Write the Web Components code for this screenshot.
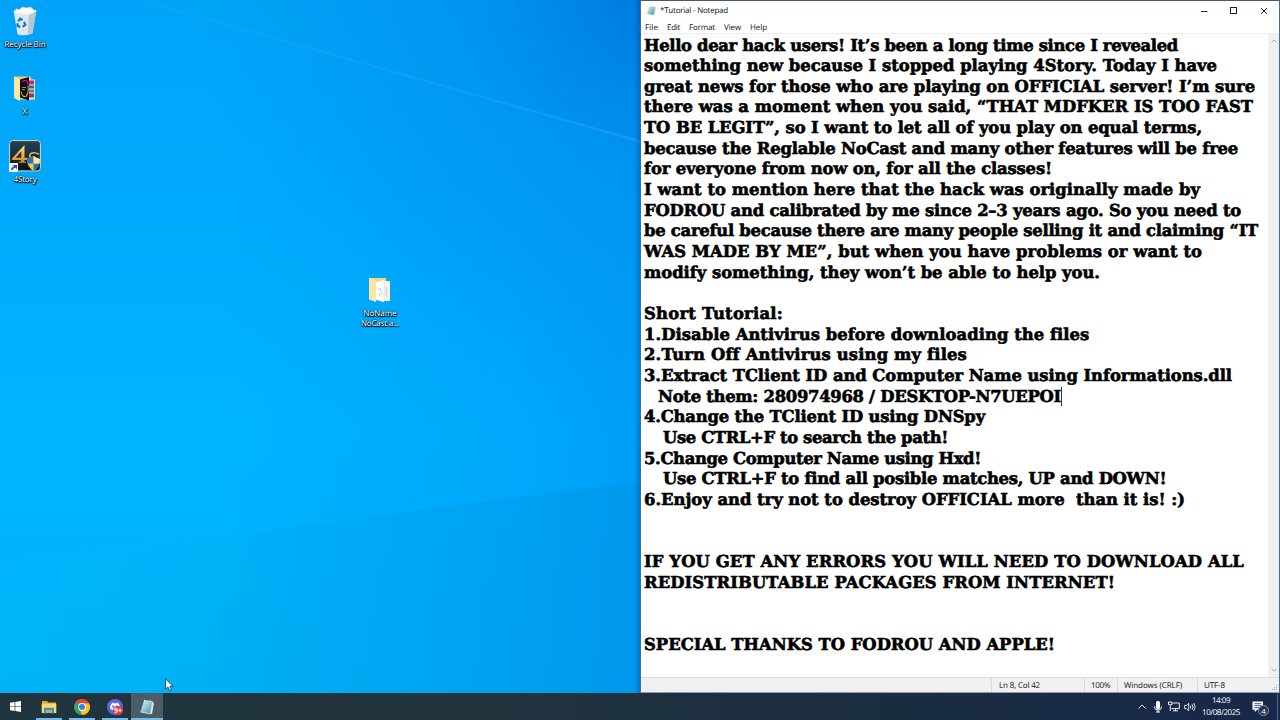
<!DOCTYPE html>
<html lang="en">
<head>
<meta charset="utf-8">
<title>Desktop</title>
<style>
  html, body {
    margin: 0;
    width: 1280px;
    height: 720px;
    overflow: hidden;
  }
</style>
</head>
<body>
<desktop-screen></desktop-screen>

<script>
const UI_FONT = '"Open Sans", "Noto Sans", sans-serif';

const ICONS = {
  bin: `<svg viewBox="0 0 28 32" width="28" height="30">
    <path d="M2 6 L6 30 Q14 33 22 29 L26 5 Z" fill="#dfe8ee"/>
    <path d="M18 8 L26 5 L22 29 L17 31 Z" fill="#b8c8d3"/>
    <path d="M2 6 L5 3 L8 4 L11 1 L16 2 L20 1 L23 4 L26 5 L18 9 Z" fill="#fafafa" stroke="#c9d4da" stroke-width=".6"/>
    <path d="M2 6 L18 9 L26 5" fill="none" stroke="#fff" stroke-width="1"/>
    <g fill="none" stroke="#1676c8" stroke-width="2.3">
      <path d="M6.7 16.5 L8.8 13.6 L11.4 15"/>
      <path d="M13 17 L14.3 20 L11.5 22.2"/>
      <path d="M9 22.3 L6 21.5 L6 18.5"/>
    </g>
  </svg>`,
  mediaFolder: `<svg viewBox="0 0 22 26" width="22" height="27">
    <path d="M0 1 H17 V24 H5 L0 22 Z" fill="#e9cf77"/>
    <path d="M12 4 H21 V24 H12 Z" fill="#e8e4ed"/>
    <path d="M14 5 H20 V9 H14 Z" fill="#b63a4d"/>
    <path d="M14 10 H20 V13 H14 Z" fill="#604eb0"/>
    <path d="M14 14 H20 V17 H14 Z" fill="#2c9a8d"/>
    <path d="M14 18 H20 V22 H14 Z" fill="#a53155"/>
    <path d="M6 4 L15 1.5 V25 L6 22 Z" fill="#150d18"/>
    <path d="M8 6 Q14 3 14 9" fill="none" stroke="#c322b5" stroke-width="1.2"/>
    <path d="M14 10 Q15 18 12 21" fill="none" stroke="#e09a2b" stroke-width="1.1"/>
    <path d="M7 16 Q8 22 12 21" fill="none" stroke="#8fbd32" stroke-width="1.1"/>
    <path d="M8 12 H12 M8 14 H11" stroke="#aaa" stroke-width=".8"/>
    <path d="M0 1 L6 3.5 V25.5 L0 22.5 Z" fill="#fbe9a5"/>
  </svg>`,
  game: `<svg viewBox="0 0 32 32" width="32" height="32">
    <defs><linearGradient id="g" x2="0" y2="1"><stop stop-color="#263f55"/><stop offset=".6" stop-color="#15293c"/><stop offset="1" stop-color="#0a0e14"/></linearGradient>
    <linearGradient id="o" x2="0" y2="1"><stop stop-color="#ffe27c"/><stop offset="1" stop-color="#d98612"/></linearGradient></defs>
    <rect x=".6" y=".6" width="30.8" height="30.3" rx="3" fill="url(#g)" stroke="#d6d9bb" stroke-width="1"/>
    <path d="M15.5 5 L3 18.6 V19.9 H12.3 L11.4 21.8 H9.5 V22.8 H17 V21.8 H15.4 V19.9 H18.5 V17.8 H15.5 Z M12.3 11.3 V17.8 H6.8 Z" fill="url(#o)" fill-rule="evenodd"/>
    <path d="M30 14.3 Q25 11.5 21.5 13.7 Q19.4 16 22 17.6 L27 20" fill="none" stroke="#eeb03c" stroke-width="1.6"/>
    <path d="M18 19 Q22 18 24.5 16 Q27 18 31 19 Q31 27 24.5 31 Q18 27 18 19 Z" fill="#f6c64a"/>
    <path d="M18 19 Q22 18 24.5 16 V23.5 H18.6 Z M24.5 23.5 H30.5 Q29 28 24.5 31 Z" fill="#1c74c9"/>
    <path d="M24.5 16 Q27 18 31 19 L30.4 23.5 H24.5 Z" fill="#ffe59a"/>
    <rect y="23" width="9" height="9" fill="#f5f7fa"/>
    <path d="M2 30 Q2 27 5 26.5 L3.6 25 H8 V29.2 L6.5 27.8 Q4 28 3.5 30 Z" fill="#2456b5"/>
  </svg>`,
  paperFolder: `<svg viewBox="0 0 22 26" width="22" height="26">
    <path d="M0 1 H17 V23 H5 L0 22 Z" fill="#f0d67f"/>
    <path d="M12 4 H21 V24 H14 Z" fill="#f2f4f5"/>
    <path d="M7 5 L15 3 V25 L7 23 Z" fill="#fff"/>
    <path d="M15 4 V24" stroke="#d5dadb" stroke-width=".6"/>
    <path d="M9 13 L11 11 L13 18 M10 16 L11 20 M17 10 L18 20" fill="none" stroke="#b9bdbf" stroke-width=".8"/>
    <path d="M0 1 L7 3 V25 L0 22.5 Z" fill="#fbe5a0"/>
  </svg>`,
  notepad: `<svg viewBox="0 0 16 16" width="100%" height="100%">
    <defs><linearGradient id="n" x2="1" y2="1"><stop stop-color="#d8f1f3"/><stop offset=".5" stop-color="#8bc9d2"/><stop offset="1" stop-color="#3f8797"/></linearGradient></defs>
    <path d="M12.5 2 L15 4 L13 15 L9 14 Z" fill="#dce2df"/>
    <path d="M5 1.5 L13.2 2.4 L10.8 14.8 L1.5 13 Z" fill="url(#n)"/>
    <path d="M5 1.5 L13.2 2.4" stroke="#eef5f4" stroke-width="1.3" stroke-dasharray="1 .6"/>
    <path d="M1.5 13 L10.8 14.8 L12 14.4" fill="none" stroke="#e8eeee" stroke-width=".8"/>
  </svg>`,
  start: `<svg viewBox="0 0 12 12" width="11" height="11"><path d="M0 1.9 L5.1 1.1 V5.6 H0 Z M5.8 1 L12 .1 V5.6 H5.8 Z M0 6.3 H5.1 V10.8 L0 10 Z M5.8 6.3 H12 V11.9 L5.8 11 Z" fill="#fff"/></svg>`,
  explorer: `<svg viewBox="0 0 16 14" width="16" height="14">
    <path d="M1 1 H6 L7.5 2.5 H15 V6 H1 Z" fill="#e0a82c"/>
    <path d="M.7 3.6 H15.3 V13 H.7 Z" fill="#fbd768"/>
    <path d="M3 13.5 V7.8 H13 V13.5 H10.6 V10.4 H5.4 V13.5 Z" fill="#3b93c6"/>
    <path d="M5.4 10.4 H10.6 V13 H5.4 Z" fill="#bfae69"/>
  </svg>`,
  chrome: `<svg viewBox="0 0 16 16" width="16" height="16">
    <path d="M8 8 L1.07 4 A8 8 0 0 1 14.93 4 Z" fill="#e94435"/>
    <path d="M8 8 L14.93 4 A8 8 0 0 1 8 16 Z" fill="#fbc116"/>
    <path d="M8 8 V16 A8 8 0 0 1 1.07 4 Z" fill="#34a552"/>
    <path d="M8 4.3 H14.93 L11.2 9.8 Z" fill="#fbc116"/>
    <path d="M4.8 9.8 L1.07 4 L8 4.3 Z" fill="#34a552"/>
    <path d="M11.2 9.8 L8 16 L6 11 Z" fill="#fbc116"/>
    <path d="M2 4 Q4 2 8 4.3 H14.9 L13 2 L8 0 L3 2 Z" fill="#e94435"/>
    <circle cx="8" cy="8" r="3.9" fill="#fff"/><circle cx="8" cy="8" r="3" fill="#347fe8"/>
  </svg>`,
  discord: `<svg viewBox="0 0 16 16" width="16" height="16">
    <circle cx="8" cy="8" r="8" fill="#5865e8"/>
    <path d="M3.3 10 Q2.7 6.2 4.7 4.2 L6.8 3.5 L7.3 4.4 H8.8 L9.3 3.5 L11.4 4.2 Q13.3 6.2 12.8 10 L10.6 11 L9.9 9.8 H6.2 L5.5 11 Z" fill="#fff"/>
    <ellipse cx="6.2" cy="7.5" rx="1" ry="1.2" fill="#5865e8"/><ellipse cx="9.9" cy="7.5" rx="1" ry="1.2" fill="#5865e8"/>
  </svg>`,
  chevron: `<svg viewBox="0 0 8 5" width="8" height="5"><path d="M.5 4.5 L4 1 L7.5 4.5" fill="none" stroke="#f2f2f2" stroke-width="1"/></svg>`,
  mic: `<svg viewBox="0 0 8 12" width="8" height="12"><rect x="2" y="0" width="4" height="8" rx="1.5" fill="#fff"/><path d="M.7 5.5 V7 Q1 9 4 9 Q7 9 7.3 7 V5.5 M4 9 V11 M2 11 H6" fill="none" stroke="#fff"/></svg>`,
  network: `<svg viewBox="0 0 12 11" width="12" height="11"><path d="M4.5 2 H11.3 V7.6 H3.5 M7.5 7.6 V9.8 M5 9.8 H10 M2.3 4.5 V10" fill="none" stroke="#eee"/><path d="M.5 1 H4 V3.7 H.5 Z" fill="#18294a" stroke="#eee"/></svg>`,
  volume: `<svg viewBox="0 0 12 10" width="12" height="10"><path d="M.6 3.4 H2.4 L4.7 1.2 V8.8 L2.4 6.6 H.6 Z M6.3 3.5 Q7.3 5 6.3 6.5 M8 2.2 Q10 5 8 7.8 M9.8 1 Q12.4 5 9.8 9" fill="none" stroke="#eee" stroke-width=".9"/></svg>`,
  action: `<svg viewBox="0 0 12 12" width="12" height="12"><path d="M.5 .5 H11 V8.8 H5 L2.8 11.2 V8.8 H.5 Z" fill="#fff"/><path d="M2.3 2.7 H9.3 M2.3 4.7 H9.3 M2.3 6.7 H7" stroke="#1b2a48" stroke-width=".8"/></svg>`,
  minimize: `<svg viewBox="0 0 8 8" width="8" height="8"><path d="M1 4.5 H7.5" stroke="#222"/></svg>`,
  maximize: `<svg viewBox="0 0 8 8" width="8" height="8"><rect x=".5" y=".5" width="6" height="6" fill="none" stroke="#222"/></svg>`,
  close: `<svg viewBox="0 0 8 8" width="8" height="8"><path d="M1 1 L7 7 M7 1 L1 7" stroke="#222"/></svg>`,
  pointer: `<svg viewBox="0 0 9 14" width="9" height="14"><path d="M.6 .8 V11 L3 8.9 L4.6 12.6 L6.4 11.8 L4.8 8.3 H8 Z" fill="#fff" stroke="#1b3340" stroke-width=".8"/></svg>`,
};

// Base class: every element renders a template string into an open root.
class View extends HTMLElement {
  constructor() {
    super();
    this.attachShadow({ mode: "open" });
  }

  connectedCallback() {
    this.shadowRoot.innerHTML = this.template();
  }
}

class SysIcon extends View {
  template() {
    return `
    <style>
      :host { display: block; flex: none; line-height: 0; }
      svg { display: block; }
    </style>
    ${ICONS[this.getAttribute("name")]}`;
  }
}

// One line of text, tracked out or in so that it spans "width" pixels.
class FitText extends View {
  connectedCallback() {
    super.connectedCallback();
    const span = this.shadowRoot.querySelector("span");
    const target = Number(this.getAttribute("width"));
    const count = this.textContent.length;
    if (!target || !count) return;
    const natural = span.getBoundingClientRect().width;
    span.style.letterSpacing = `${(target - natural) / count}px`;
  }

  template() {
    return `
    <style>
      :host { display: block; text-rendering: geometricPrecision; }
      span { display: block; width: max-content; margin: 0 auto; white-space: pre; }
      :host([start]) span { margin: 0; }
    </style>
    <span><slot></slot></span>`;
  }
}

class DesktopIcon extends View {
  template() {
    return `
    <style>
      :host {
        position: absolute;
        width: 60px;
        display: flex;
        flex-direction: column;
        align-items: center;
        font: 8px/10px ${UI_FONT};
        color: #fff;
        text-shadow: 0 1px 1px #000, 0 0 2px #000, 1px 1px 1px #000;
      }
      .art {
        height: 34px;
        display: flex;
        align-items: center;
      }
      .label { margin-top: 2px; }
    </style>
    <div class="art"><sys-icon name="${this.getAttribute("icon")}"></sys-icon></div>
    <div class="label"><slot></slot></div>`;
  }
}

class WallPaper extends View {
  template() {
    return `
    <style>
      :host { display: block; position: relative; overflow: hidden; }
      .bg { display: block; width: 640px; height: 693px; }
    </style>
    <svg class="bg" viewBox="0 0 640 693" preserveAspectRatio="none">
      <defs>
        <linearGradient id="base" x2="0" y2="1">
          <stop stop-color="#00a4f6"/>
          <stop offset=".3" stop-color="#00acfc"/>
          <stop offset=".62" stop-color="#00b8ff"/>
          <stop offset="1" stop-color="#00b4f9"/>
        </linearGradient>
        <radialGradient id="corner" gradientUnits="userSpaceOnUse" cx="650" cy="-10" r="460">
          <stop stop-color="#0076da" stop-opacity=".9"/>
          <stop offset=".35" stop-color="#0084e6" stop-opacity=".45"/>
          <stop offset="1" stop-color="#0098f4" stop-opacity="0"/>
        </radialGradient>
        <linearGradient id="side">
          <stop offset=".35" stop-color="#0090f2" stop-opacity="0"/>
          <stop offset=".8" stop-color="#0090f2" stop-opacity=".35"/>
          <stop offset="1" stop-color="#0090f2" stop-opacity=".65"/>
        </linearGradient>
        <linearGradient id="beam">
          <stop stop-color="#3cb4ff" stop-opacity=".1"/>
          <stop offset="1" stop-color="#2aa4ff" stop-opacity=".45"/>
        </linearGradient>
        <linearGradient id="shade">
          <stop stop-color="#008cd8" stop-opacity=".02"/>
          <stop offset="1" stop-color="#008cd8" stop-opacity=".3"/>
        </linearGradient>
        <linearGradient id="edge">
          <stop stop-color="#004a90" stop-opacity="0"/>
          <stop offset="1" stop-color="#004a90" stop-opacity=".4"/>
        </linearGradient>
      </defs>
      <rect width="640" height="693" fill="url(#base)"/>
      <rect width="640" height="693" fill="url(#side)"/>
      <rect width="640" height="693" fill="url(#corner)"/>
      <path d="M139 0 L640 141 V482 L0 562 V0 Z" fill="#00a2ff" opacity=".16"/>
      <path d="M0 562 L240 533 L640 482 V693 H0 Z" fill="url(#shade)"/>
      <path d="M139 -1 L640 140 V142.5 L139 1 Z" fill="url(#beam)"/>
      <rect x="634" width="6" height="693" fill="url(#edge)"/>
    </svg>
    <slot></slot>`;
  }
}

// [width, text, indent, caret]
const NOTE = [
  [534, "Hello dear hack users! It’s been a long time since I revealed"],
  [573, "something new because I stopped playing 4Story. Today I have"],
  [611, "great news for those who are playing on OFFICIAL server! I’m sure"],
  [609, "there was a moment when you said, “THAT MDFKER IS TOO FAST"],
  [558, "TO BE LEGIT”, so I want to let all of you play on equal terms,"],
  [594, "because the Reglable NoCast and many other features will be free"],
  [408, "for everyone from now on, for all the classes!"],
  [556, "I want to mention here that the hack was originally made by"],
  [597, "FODROU and calibrated by me since 2–3 years ago. So you need to"],
  [614, "be careful because there are many people selling it and claiming “IT"],
  [558, "WAS MADE BY ME”, but when you have problems or want to"],
  [456, "modify something, they won’t be able to help you."],
  [0, ""],
  [139, "Short Tutorial:"],
  [444, "1.Disable Antivirus before downloading the files"],
  [321, "2.Turn Off Antivirus using my files"],
  [588, "3.Extract TClient ID and Computer Name using Informations.dll"],
  [403, "Note them: 280974968 / DESKTOP-N7UEPOI", 14, true],
  [341, "4.Change the TClient ID using DNSpy"],
  [285, "Use CTRL+F to search the path!", 19],
  [337, "5.Change Computer Name using Hxd!"],
  [502, "Use CTRL+F to find all posible matches, UP and DOWN!", 19],
  [541, "6.Enjoy and try not to destroy OFFICIAL more  than it is! :)"],
  [0, ""],
  [0, ""],
  [600, "IF YOU GET ANY ERRORS YOU WILL NEED TO DOWNLOAD ALL"],
  [471, "REDISTRIBUTABLE PACKAGES FROM INTERNET!"],
  [0, ""],
  [0, ""],
  [411, "SPECIAL THANKS TO FODROU AND APPLE!"],
];

class NotepadWindow extends View {
  template() {
    const lines = NOTE.map(([width, text, indent = 0, caret]) =>
      `<div class="line" style="padding-left:${indent}px"><fit-text start width="${width}">${text}</fit-text>${caret ? '<i class="caret"></i>' : ""}</div>`
    ).join("");
    return `
    <style>
      :host {
        box-sizing: border-box;
        display: grid;
        grid-template-rows: 19px 14px 1fr 15px;
        border: 1px solid #3f6f95;
        border-top-color: #49586a;
        border-bottom-color: #8b9dab;
        background: #fff;
        color: #111;
        font: 8px/14px ${UI_FONT};
        min-height: 0;
      }
      .title { display: flex; align-items: center; }
      .title > sys-icon { width: 11px; height: 11px; margin: 0 3px 0 5px; }
      .title .name { flex: 1; }
      .buttons { display: flex; gap: 22px; padding-right: 11px; }
      .menu { display: flex; gap: 9px; padding-left: 4px; border-bottom: 1px solid #eee; box-sizing: border-box; line-height: 15px; }
      .body { display: grid; grid-template-columns: 1fr 11px; min-height: 0; }
      .text {
        padding-left: 3px;
        font: bold 16.4px/20.67px "DejaVu Serif", serif;
        -webkit-text-stroke: .6px #000;
        color: #000;
        padding-top: 1.5px;
        min-width: 0;
        min-height: 0;
      }
      .line { height: 20.67px; display: flex; align-items: center; }
      .caret { width: 1px; height: 19px; background: #333; }
      .scroll {
        background: #f0f0f0;
        display: flex;
        flex-direction: column;
        justify-content: space-between;
        align-items: center;
        padding: 5px 0;
      }
      .scroll svg { display: block; }
      .status {
        background: #f0f0f0;
        border-top: 1px solid #dcdcdc;
        box-sizing: border-box;
        display: grid;
        grid-template-columns: 351px 93px 33px 80px 1fr 9px;
        line-height: 16px;
      }
      .status > div { border-right: 1px solid #dadada; padding-left: 6px; height: 14px; }
      .status > div:nth-child(2) { padding-left: 7px; }
      .status > div:nth-child(5) { border: 0; }
      .grip { align-self: end; }
    </style>
    <div class="title">
      <sys-icon name="notepad"></sys-icon>
      <div class="name"><fit-text start width="68">*Tutorial - Notepad</fit-text></div>
      <div class="buttons">
        <sys-icon name="minimize"></sys-icon>
        <sys-icon name="maximize"></sys-icon>
        <sys-icon name="close"></sys-icon>
      </div>
    </div>
    <div class="menu">
      <fit-text width="13">File</fit-text>
      <fit-text width="13">Edit</fit-text>
      <fit-text width="26">Format</fit-text>
      <fit-text width="17">View</fit-text>
      <fit-text width="17">Help</fit-text>
    </div>
    <div class="body">
      <div class="text">${lines}</div>
      <div class="scroll">
        <svg width="6" height="4"><path d="M.5 3.5 L3 1 L5.5 3.5" fill="none" stroke="#aaa"/></svg>
        <svg width="6" height="4"><path d="M.5 .5 L3 3 L5.5 .5" fill="none" stroke="#aaa"/></svg>
      </div>
    </div>
    <div class="status">
      <div></div>
      <div><fit-text start width="41">Ln 8, Col 42</fit-text></div>
      <div><fit-text start width="19">100%</fit-text></div>
      <div><fit-text start width="58">Windows (CRLF)</fit-text></div>
      <div><fit-text start width="21">UTF-8</fit-text></div>
      <svg class="grip" width="8" height="8"><path d="M6 1h1v1h-1z M4 3h1v1h-1z M6 3h1v1h-1z M2 5h1v1h-1z M4 5h1v1h-1z M6 5h1v1h-1z" fill="#aaa"/></svg>
    </div>`;
  }
}

class TaskButton extends View {
  template() {
    const badge = this.getAttribute("badge");
    return `
    <style>
      :host {
        display: flex;
        width: 33px;
        height: 27px;
        align-items: center;
        justify-content: center;
        position: relative;
        box-sizing: border-box;
      }
      :host([active]) { background: #4b5c64; width: 32px; }
      :host([open])::after {
        content: "";
        position: absolute;
        bottom: 0;
        left: 4px;
        right: 3px;
        height: 2px;
        background: #76b9ed;
      }
      :host([active])::after { left: 0; right: 0; }
      sys-icon[name="notepad"] { width: 16px; height: 16px; }
      .badge {
        position: absolute;
        left: 15px;
        top: 13px;
        width: 10px;
        height: 9px;
        border-radius: 5px;
        background: #e03c45;
        color: #fff;
        font: bold 7px/9px ${UI_FONT};
        text-align: center;
      }
    </style>
    <sys-icon name="${this.getAttribute("icon")}"></sys-icon>
    ${badge ? `<span class="badge">${badge}</span>` : ""}`;
  }
}

class TaskBar extends View {
  template() {
    return `
    <style>
      :host {
        display: flex;
        justify-content: space-between;
        background: linear-gradient(90deg, #20343d, #22353e 35%, #1b2d3f 65%, #18284a);
        color: #fff;
        font: 8px/12px ${UI_FONT};
      }
      .apps { display: flex; align-items: center; margin-left: -1px; }
      .tray { display: flex; align-items: center; }
      .tray > sys-icon { width: 16px; display: flex; justify-content: center; }
      .clock { width: 46px; }
      .action { position: relative; margin: 0 13px 0 8px; }
      .count {
        position: absolute;
        left: 6px;
        top: 4px;
        width: 9px;
        height: 9px;
        border: 1px solid #8794a5;
        border-radius: 50%;
        background: #26354f;
        font-size: 8px;
        line-height: 9px;
        text-align: center;
      }
      .peek { width: 1px; height: 27px; background: #54617a; margin-right: 2px; }
    </style>
    <div class="apps">
      <task-button icon="start"></task-button>
      <task-button icon="explorer" open></task-button>
      <task-button icon="chrome" open></task-button>
      <task-button icon="discord" badge="9+" open></task-button>
      <task-button icon="notepad" open active></task-button>
    </div>
    <div class="tray">
      <sys-icon name="chevron"></sys-icon>
      <sys-icon name="mic"></sys-icon>
      <sys-icon name="network"></sys-icon>
      <sys-icon name="volume"></sys-icon>
      <div class="clock">
        <fit-text width="18">14:09</fit-text>
        <fit-text width="38">10/08/2025</fit-text>
      </div>
      <div class="action"><sys-icon name="action"></sys-icon><span class="count">4</span></div>
      <div class="peek"></div>
    </div>`;
  }
}

class DesktopScreen extends View {
  template() {
    return `
    <style>
      :host {
        display: grid;
        width: 1280px;
        height: 720px;
        grid-template: 693px 27px / 640px 640px;
        overflow: hidden;
      }
      task-bar { grid-column: 1 / 3; }
      .pointer { position: absolute; left: 165px; top: 678px; }
    </style>
    <wall-paper>
      <desktop-icon icon="bin" style="left:-5px;top:4px"><fit-text width="41">Recycle Bin</fit-text></desktop-icon>
      <desktop-icon icon="mediaFolder" style="left:-5px;top:71px"><fit-text width="5">X</fit-text></desktop-icon>
      <desktop-icon icon="game" style="left:-5px;top:139px"><fit-text width="23">4Story</fit-text></desktop-icon>
      <desktop-icon icon="paperFolder" style="left:350px;top:273px"><fit-text width="33">NoName</fit-text><fit-text width="38">NoCast a...</fit-text></desktop-icon>
      <sys-icon class="pointer" name="pointer"></sys-icon>
    </wall-paper>
    <notepad-window></notepad-window>
    <task-bar></task-bar>`;
  }
}

customElements.define("sys-icon", SysIcon);
customElements.define("fit-text", FitText);
customElements.define("desktop-icon", DesktopIcon);
customElements.define("wall-paper", WallPaper);
customElements.define("notepad-window", NotepadWindow);
customElements.define("task-button", TaskButton);
customElements.define("task-bar", TaskBar);
customElements.define("desktop-screen", DesktopScreen);
</script>
</body>
</html>
